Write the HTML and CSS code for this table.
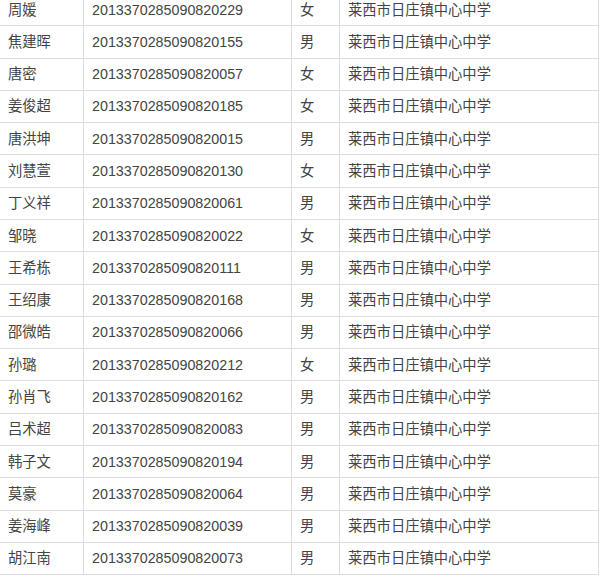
FILE: index.html
```html
<!DOCTYPE html>
<html lang="zh-CN">
<head>
    <meta charset="UTF-8">
    <meta name="viewport" content="width=device-width, initial-scale=1.0">
    <title>学生名单</title>
    <link rel="stylesheet" href="styles.css">
</head>
<body>
    <table class="roster">
        <colgroup>
            <col class="col-name">
            <col class="col-id">
            <col class="col-sex">
            <col class="col-school">
        </colgroup>
        <tbody>
            <tr><td>周媛</td><td>2013370285090820229</td><td>女</td><td>莱西市日庄镇中心中学</td></tr>
            <tr><td>焦建晖</td><td>2013370285090820155</td><td>男</td><td>莱西市日庄镇中心中学</td></tr>
            <tr><td>唐密</td><td>2013370285090820057</td><td>女</td><td>莱西市日庄镇中心中学</td></tr>
            <tr><td>姜俊超</td><td>2013370285090820185</td><td>女</td><td>莱西市日庄镇中心中学</td></tr>
            <tr><td>唐洪坤</td><td>2013370285090820015</td><td>男</td><td>莱西市日庄镇中心中学</td></tr>
            <tr><td>刘慧萱</td><td>2013370285090820130</td><td>女</td><td>莱西市日庄镇中心中学</td></tr>
            <tr><td>丁义祥</td><td>2013370285090820061</td><td>男</td><td>莱西市日庄镇中心中学</td></tr>
            <tr><td>邹晓</td><td>2013370285090820022</td><td>女</td><td>莱西市日庄镇中心中学</td></tr>
            <tr><td>王希栋</td><td>2013370285090820111</td><td>男</td><td>莱西市日庄镇中心中学</td></tr>
            <tr><td>王绍康</td><td>2013370285090820168</td><td>男</td><td>莱西市日庄镇中心中学</td></tr>
            <tr><td>邵微皓</td><td>2013370285090820066</td><td>男</td><td>莱西市日庄镇中心中学</td></tr>
            <tr><td>孙璐</td><td>2013370285090820212</td><td>女</td><td>莱西市日庄镇中心中学</td></tr>
            <tr><td>孙肖飞</td><td>2013370285090820162</td><td>男</td><td>莱西市日庄镇中心中学</td></tr>
            <tr><td>吕术超</td><td>2013370285090820083</td><td>男</td><td>莱西市日庄镇中心中学</td></tr>
            <tr><td>韩子文</td><td>2013370285090820194</td><td>男</td><td>莱西市日庄镇中心中学</td></tr>
            <tr><td>莫豪</td><td>2013370285090820064</td><td>男</td><td>莱西市日庄镇中心中学</td></tr>
            <tr><td>姜海峰</td><td>2013370285090820039</td><td>男</td><td>莱西市日庄镇中心中学</td></tr>
            <tr><td>胡江南</td><td>2013370285090820073</td><td>男</td><td>莱西市日庄镇中心中学</td></tr>
        </tbody>
    </table>
</body>
</html>
```

FILE: styles.css
```css
body { margin: 0; background: #fff; font-family: "Liberation Sans", "Noto Sans CJK SC", sans-serif; font-size: 14.3px; color: #444; overflow: hidden; }
.roster { border-collapse: collapse; table-layout: fixed; width: 599px; margin: -7px 0 0 -1px; }
.roster td { border: 1px solid #ddd; padding: 5.65px 8px; line-height: 20px; white-space: nowrap; }
.col-name { width: 84px; }
.col-id { width: 208px; }
.col-sex { width: 48px; }
.col-school { width: 259px; }
```
